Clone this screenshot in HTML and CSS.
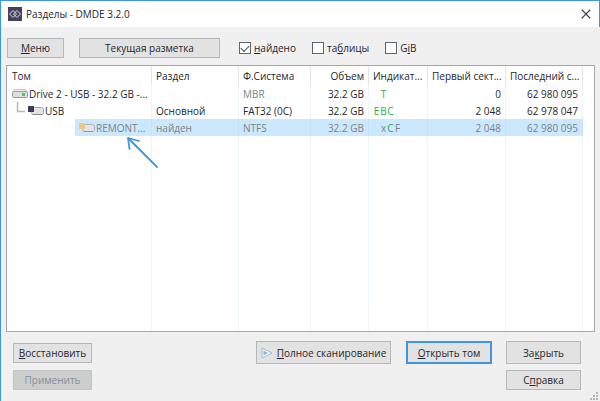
FILE: index.html
```html
<!DOCTYPE html>
<html lang="ru">
<head>
<meta charset="UTF-8">
<meta name="viewport" content="width=device-width, initial-scale=1">
<title>Разделы - DMDE 3.2.0</title>
<link rel="stylesheet" href="styles.css">
</head>
<body>
<header class="titlebar">
  <svg class="app-icon" width="14" height="14" viewBox="0 0 14 14">
    <rect width="14" height="14" fill="#45415a"/>
    <g fill="none" stroke="#d8d8e0" stroke-width="1">
      <path d="M1.5 7 L5 3.5 L8.5 7 L5 10.5 Z"/>
      <path d="M5.5 7 L9 3.5 L12.5 7 L9 10.5 Z"/>
    </g>
  </svg>
  <h1>Разделы - DMDE 3.2.0</h1>
  <button type="button" class="close" aria-label="Закрыть окно">
    <svg width="10" height="10" viewBox="0 0 10 10"><path d="M0.7 0.7 L9.3 9.3 M9.3 0.7 L0.7 9.3" stroke="#33333d" stroke-width="1.2"/></svg>
  </button>
</header>

<main class="window">
  <div class="toolbar">
    <button type="button" class="btn menu"><u>М</u>еню</button>
    <button type="button" class="btn layout">Текущая разметка</button>
    <div class="filters">
      <label for="found"><input type="checkbox" id="found" checked><span><u>н</u>айдено</span></label>
      <label for="tables"><input type="checkbox" id="tables"><span>та<u>б</u>лицы</span></label>
      <label for="gib"><input type="checkbox" id="gib"><span>G<u>i</u>B</span></label>
    </div>
  </div>

  <div class="list">
    <table>
      <colgroup>
        <col class="c-volume"><col class="c-part"><col class="c-fs"><col class="c-size"><col class="c-ind"><col class="c-first"><col class="c-last"><col>
      </colgroup>
      <thead>
        <tr>
          <th>Том</th>
          <th>Раздел</th>
          <th>Ф.Система</th>
          <th class="num">Объем</th>
          <th>Индикат...</th>
          <th class="num">Первый сект...</th>
          <th class="num">Последний с...</th>
          <td></td>
        </tr>
      </thead>
      <tbody>
        <tr>
          <td>
            <div class="node">
              <svg width="16" height="11" viewBox="0 0 16 11">
                <path d="M2.5 1.5 H13.5 L15.5 4.5 H0.5 Z" fill="#f1f1f1" stroke="#c4c4c4"/>
                <rect x="0.5" y="3.5" width="15" height="6" rx="1" fill="#dedede" stroke="#9c9c9c"/>
                <rect x="10" y="5" width="3" height="3" fill="#45cf62"/>
              </svg>
              Drive 2 - USB - 32.2 GB -...
            </div>
          </td>
          <td></td>
          <td class="muted">MBR</td>
          <td class="num">32.2 GB</td>
          <td class="ind"><i></i><b class="ok">T</b></td>
          <td class="num">0</td>
          <td class="num">62 980 095</td>
          <td></td>
        </tr>
        <tr>
          <td>
            <div class="node child">
              <svg class="branch" width="11" height="17" viewBox="0 0 11 17"><path d="M1.5 0 V9.5 H9" fill="none" stroke="#b5b5b5" stroke-width="1.4"/></svg>
              <svg width="16" height="11" viewBox="0 0 16 11">
                <rect x="3.5" y="2.5" width="12" height="7" rx="2" fill="#e4e4e4" stroke="#a4a4a4"/>
                <path d="M5 9.5 H14" stroke="#858585"/>
                <rect x="0" y="1" width="6" height="6" fill="#3f3a55"/>
              </svg>
              USB
            </div>
          </td>
          <td>Основной</td>
          <td>FAT32 (0C)</td>
          <td class="num">32.2 GB</td>
          <td class="ind"><b class="ok">E</b><b class="ok">B</b><b class="ok">C</b></td>
          <td class="num">2 048</td>
          <td class="num">62 978 047</td>
          <td></td>
        </tr>
        <tr class="selected">
          <td>
            <div class="node grandchild">
              <svg width="16" height="11" viewBox="0 0 16 11">
                <rect x="3.5" y="2.5" width="12" height="7" rx="2" fill="#e4e4e4" stroke="#a8b4bc"/>
                <path d="M5 9.5 H14" stroke="#8f9599"/>
                <rect x="0" y="1" width="6" height="6" fill="#ecca86"/>
              </svg>
              REMONT...
              <svg class="arrow" width="34" height="36" viewBox="0 0 34 36">
                <path d="M31 31 L2 2 M3.5 13 L2 2 L13 5" fill="none" stroke="#3d97df" stroke-width="1.8" stroke-linecap="round" stroke-linejoin="round"/>
              </svg>
            </div>
          </td>
          <td>найден</td>
          <td>NTFS</td>
          <td class="num">32.2 GB</td>
          <td class="ind"><i></i><b>x</b><b class="ok">C</b><b>F</b></td>
          <td class="num">2 048</td>
          <td class="num">62 980 095</td>
          <td></td>
        </tr>
        <tr class="rest"><td></td><td></td><td></td><td></td><td></td><td></td><td></td><td></td></tr>
      </tbody>
    </table>
  </div>

  <footer class="actions">
    <div class="row">
      <button type="button" class="btn restore"><u>В</u>осстановить</button>
      <button type="button" class="btn tall scan">
        <svg width="12" height="12" viewBox="0 0 12 12">
          <path d="M1 1 L11 6 L1 11 Z" fill="#f3f8fb" stroke="#a9bcc8"/>
          <path d="M2.5 3.5 L7 6 L2.5 8.5 Z" fill="#7cbdea"/>
        </svg>
        <span><u>П</u>олное сканирование</span>
      </button>
      <button type="button" class="btn tall open"><u>О</u>ткрыть том</button>
      <button type="button" class="btn tall side">За<u>к</u>рыть</button>
    </div>
    <div class="row">
      <button type="button" class="btn restore" disabled>Применить</button>
      <button type="button" class="btn side help">С<u>п</u>равка</button>
    </div>
  </footer>
</main>

<svg class="grip" width="8" height="8" viewBox="0 0 8 8" fill="#b5b5b5">
  <path d="M6 0h2v2h-2z M3 3h2v2h-2z M6 3h2v2h-2z M0 6h2v2h-2z M3 6h2v2h-2z M6 6h2v2h-2z"/>
</svg>
</body>
</html>
```
FILE: styles.css
```css
* {
  box-sizing: border-box;
}
body {
  font-family: "Open Sans", "Noto Sans", sans-serif;
  font-size: 10px;
  line-height: 16px;
  color: #26262c;
  background: #f0f0f0;
  margin: 0;
  min-height: 100vh;
  display: flex;
  flex-direction: column;
  border-top: 1px solid #3d97df;
  border-left: 1px solid #3d97df;
  position: relative;
}
svg {
  flex-shrink: 0;
}
.titlebar {
  display: flex;
  align-items: center;
  gap: 4px;
  height: 26px;
  padding: 0 7px;
  background: #fff;
  border-right: 1px solid #3d97df;
}
.titlebar h1 {
  margin: 0;
  font-size: 10px;
  font-weight: 400;
}
.close {
  margin-left: auto;
  padding: 0;
  width: 12px;
  height: 12px;
  border: none;
  background: none;
  display: flex;
  align-items: center;
  justify-content: center;
}
.window {
  flex: 1;
  display: flex;
  flex-direction: column;
  padding: 11px 5px 11px 5px;
}
.toolbar {
  display: flex;
  align-items: center;
  padding-left: 1px;
}
.btn {
  font: inherit;
  color: inherit;
  height: 20px;
  padding: 0;
  border: 1px solid #b5b8b9;
  background: #e2e2e2;
  text-align: center;
  white-space: nowrap;
}
.menu {
  width: 57px;
  margin-right: 15px;
}
.layout {
  width: 141px;
}
.filters {
  display: flex;
  gap: 16px;
  margin-left: 19px;
}
.filters label {
  display: flex;
  align-items: center;
  gap: 3px;
  min-width: 56px;
}
input[type="checkbox"] {
  appearance: none;
  width: 12px;
  height: 12px;
  margin: 0;
  border: 1px solid #5c6670;
  background: #fff;
}
input[type="checkbox"]:checked::after {
  content: "";
  display: block;
  width: 7px;
  height: 4px;
  margin: 2px 1px;
  border: solid #3f4650;
  border-width: 0 0 1px 1px;
  transform: rotate(-45deg);
}

/* partition list */
.list {
  flex: 1;
  display: flex;
  margin-top: 7px;
  border: 1px solid #a4a7ab;
  background: #fff;
}
table {
  width: 100%;
  table-layout: fixed;
  border-collapse: separate;
  border-spacing: 0;
}
.c-volume { width: 145px; }
.c-part { width: 87px; }
.c-fs { width: 72px; }
.c-size { width: 58px; }
.c-ind { width: 59px; }
.c-first { width: 78px; }
.c-last { width: 77px; }
th, td {
  height: 17px;
  padding: 0 4px;
  font-weight: 400;
  text-align: left;
  white-space: nowrap;
  border-right: 1px solid #eff6fb;
}
th {
  height: 19px;
  border-right-color: #e3e5e7;
}
th:first-child {
  padding-left: 5px;
}
td:first-child {
  padding: 0 0 0 5px;
}
td:last-child {
  border-right: none;
}
.num {
  text-align: right;
}
.muted, .selected {
  color: #7d8184;
}
.selected td {
  background: #cce8ff;
  border-right-color: #c4e2fa;
}
.selected td:first-child, .selected td:last-child {
  background: none;
}
.selected td:first-child {
  padding-left: 68px;
}
.rest td {
  height: auto;
}
.node {
  display: flex;
  align-items: center;
  gap: 1px;
  height: 17px;
}
.child {
  padding-left: 4px;
}
.grandchild {
  position: relative;
  padding-left: 4px;
  background: #cce8ff;
}
.arrow {
  position: absolute;
  left: 51px;
  top: 17px;
}
.ind b, .ind i {
  display: inline-block;
  width: 7px;
  font-weight: 400;
  text-align: center;
}
.ind .ok {
  color: #2fae3c;
}

/* bottom buttons */
.actions {
  display: flex;
  flex-direction: column;
  gap: 6px;
  padding: 9px 14px 0 7px;
}
.row {
  display: flex;
  align-items: center;
}
.restore {
  width: 79px;
}
.tall {
  height: 23px;
}
.scan {
  display: flex;
  align-items: center;
  justify-content: center;
  gap: 4px;
  width: 135px;
  margin-left: auto;
}
.open {
  width: 86px;
  margin: 0 14px 0 15px;
  border: 2px solid #3d97df;
}
.side {
  width: 75px;
}
.help {
  margin-left: auto;
}
.btn:disabled {
  color: #85909c;
  background: #cccecd;
  border-color: #c4c6c5;
}
.grip {
  position: absolute;
  right: 2px;
  bottom: 1px;
}
```
